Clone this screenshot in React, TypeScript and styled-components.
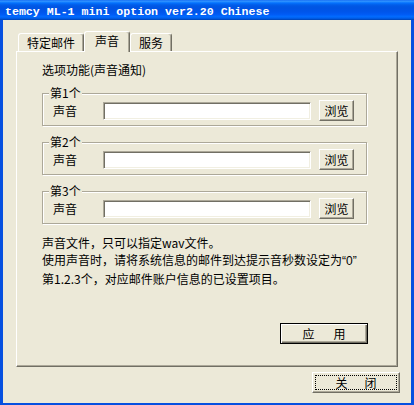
import React from 'react';
import styled, { createGlobalStyle } from 'styled-components';

const GlobalStyle = createGlobalStyle`
  html, body { margin: 0; padding: 0; background: #ECE9D8; }
  body {
    font-family: "Noto Sans CJK SC", "Liberation Sans", sans-serif;
    font-size: 12px;
    color: #000;
  }
  * { box-sizing: border-box; }
`;

const Window = styled.div`
  width: 414px;
  height: 405px;
  display: flex;
  flex-direction: column;
  overflow: hidden;
`;

const TitleBar = styled.div`
  height: 20px;
  flex: none;
  display: flex;
  align-items: center;
  padding: 3px 0 0 5px;
  background: linear-gradient(
    to bottom,
    #0058ee 0%,
    #3593ff 4%,
    #288eff 8%,
    #127dff 12%,
    #036ffc 16%,
    #0262ee 22%,
    #0057e5 30%,
    #0054e3 40%,
    #0055eb 60%,
    #005bf5 72%,
    #026afe 82%,
    #0062ef 90%,
    #0052d6 95%,
    #0040ab 100%
  );
  color: #fff;
  font-family: "Liberation Mono", "DejaVu Sans Mono", monospace;
  font-weight: bold;
  font-size: 11.6px;
  white-space: pre;
`;

const Frame = styled.div`
  flex: 1;
  display: flex;
  flex-direction: column;
  background: #ece9d8;
  border-style: solid;
  border-color: #0650e0;
  border-width: 0 3px 2px 3px;
  padding: 11px 13px 0 13px;
`;

const TabStrip = styled.div`
  height: 20px;
  display: flex;
  align-items: flex-end;
  padding-left: 2px;
`;

const Tab = styled.div<{ $active?: boolean }>`
  position: relative;
  display: flex;
  align-items: center;
  justify-content: center;
  background: #ece9d8;
  border-style: solid;
  border-width: 1px 1px 0 1px;
  border-color: #fff #716f64 transparent #fff;
  box-shadow: inset -1px 0 0 #aca899;
  border-radius: 3px 3px 0 0;
  line-height: 14px;
  height: ${(p) => (p.$active ? '21px' : '18px')};
  padding: ${(p) => (p.$active ? '0 10px 3px 10px' : '0 8px 0 8px')};
  margin-bottom: ${(p) => (p.$active ? '-1px' : '0')};
  z-index: ${(p) => (p.$active ? 2 : 0)};
`;

const Panel = styled.div`
  position: relative;
  z-index: 1;
  height: 316px;
  flex: none;
  display: flex;
  flex-direction: column;
  border-style: solid;
  border-width: 1px;
  border-color: #fff #716f64 #716f64 #fff;
  box-shadow: inset -1px -1px 0 #aca899;
  padding: 9px 29px 0 25px;
`;

const Heading = styled.div`
  line-height: 17px;
`;

const GroupBox = styled.div<{ $first?: boolean }>`
  position: relative;
  margin-top: ${(p) => (p.$first ? '15px' : '16px')};
  margin-right: 1px;
  height: 33px;
  display: flex;
  align-items: center;
  padding: 2px 0 0 10px;
  border: 1px solid #aca899;
  box-shadow: inset 1px 1px 0 #fff, 1px 1px 0 #fff;
`;

const Legend = styled.span`
  position: absolute;
  top: -8px;
  left: 6px;
  padding: 0 1px;
  line-height: 14px;
  background: #ece9d8;
`;

const FieldLabel = styled.span`
  width: 24px;
  line-height: 14px;
  white-space: nowrap;
`;

const TextInput = styled.input`
  margin: 0 0 0 26px;
  width: 208px;
  height: 18px;
  padding: 0 3px;
  background: #fff;
  border-style: solid;
  border-width: 1px;
  border-color: #aca899 #fff #fff #aca899;
  box-shadow: inset 1px 1px 0 #716f64, inset -1px -1px 0 #f1efe2;
  font: inherit;
  outline: none;
`;

const Button = styled.button<{ $w: number; $default?: boolean; $focus?: boolean }>`
  position: relative;
  width: ${(p) => p.$w}px;
  height: 21px;
  margin: 0;
  padding: 0;
  display: flex;
  align-items: center;
  justify-content: center;
  background: #ece9d8;
  color: #000;
  font: inherit;
  line-height: 14px;
  border-style: solid;
  border-width: 1px;
  border-color: ${(p) => (p.$default ? '#000' : '#fff #716f64 #716f64 #fff')};
  box-shadow: ${(p) =>
    p.$default
      ? 'inset 1px 1px 0 #fff, inset -1px -1px 0 #716f64, inset -2px -2px 0 #aca899'
      : 'inset -1px -1px 0 #aca899'};
  &::after {
    content: '';
    display: ${(p) => (p.$focus ? 'block' : 'none')};
    position: absolute;
    inset: 2px;
    border: 1px dotted #000;
  }
`;

const BrowseButton = styled(Button)`
  margin-left: 8px;
`;

const SpacedText = styled.span<{ $sp: number }>`
  letter-spacing: ${(p) => p.$sp}px;
  padding-left: ${(p) => p.$sp}px;
  white-space: pre;
`;

const Notes = styled.div`
  margin-top: 10px;
  line-height: 17px;
  white-space: nowrap;
`;

const Latin = styled.span`
  font-family: "Liberation Sans", sans-serif;
`;

const ApplyRow = styled.div`
  margin-top: 36px;
  display: flex;
  justify-content: flex-end;
`;

const CloseRow = styled.div`
  margin-top: 5px;
  margin-right: -2px;
  display: flex;
  justify-content: flex-end;
`;

const groups = ['第1个', '第2个', '第3个'];

export default function App() {
  return (
    <>
      <GlobalStyle />
      <Window>
        <TitleBar>temcy ML-1 mini option ver2.20 Chinese</TitleBar>
        <Frame>
          <TabStrip>
            <Tab>特定邮件</Tab>
            <Tab $active>声音</Tab>
            <Tab>服务</Tab>
          </TabStrip>
          <Panel>
            <Heading>选项功能(声音通知)</Heading>
            {groups.map((g, i) => (
              <GroupBox key={g} $first={i === 0}>
                <Legend>{g}</Legend>
                <FieldLabel>声音</FieldLabel>
                <TextInput type="text" />
                <BrowseButton $w={35}>浏览</BrowseButton>
              </GroupBox>
            ))}
            <Notes>
              <div>声音文件，只可以指定wav文件。</div>
              <div>
                使用声音时，请将系统信息的邮件到达提示音秒数设定为<Latin>“0”</Latin>
              </div>
              <div>第1.2.3个，对应邮件账户信息的已设置项目。</div>
            </Notes>
            <ApplyRow>
              <Button $w={88} $default>
                <SpacedText $sp={3.5}>应　用</SpacedText>
              </Button>
            </ApplyRow>
          </Panel>
          <CloseRow>
            <Button $w={88} $focus>
              <SpacedText $sp={2.5}>关　闭</SpacedText>
            </Button>
          </CloseRow>
        </Frame>
      </Window>
    </>
  );
}
